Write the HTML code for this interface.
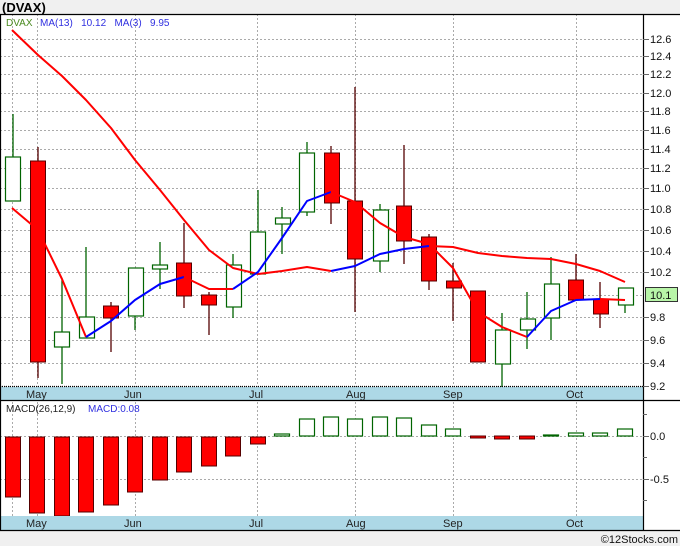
<!DOCTYPE html>
<html><head><meta charset="utf-8"><style>
html,body{margin:0;padding:0;background:#f0f0f0;}
svg{display:block;font-family:"Liberation Sans","DejaVu Sans",sans-serif;}
</style></head><body>
<svg width="680" height="546" viewBox="0 0 680 546" xmlns="http://www.w3.org/2000/svg">
<rect x="0" y="0" width="680" height="546" fill="#f0f0f0"/>
<text x="2" y="12" font-size="13" font-weight="bold" fill="#000">(DVAX)</text>
<rect x="0" y="14" width="680" height="517" fill="#fff"/>
<g stroke="#aaa" stroke-dasharray="2,2" stroke-width="1">
<line x1="0" x2="643" y1="39.5" y2="39.5"/><line x1="0" x2="643" y1="56.5" y2="56.5"/>
<line x1="0" x2="643" y1="74.5" y2="74.5"/><line x1="0" x2="643" y1="93.5" y2="93.5"/>
<line x1="0" x2="643" y1="111.5" y2="111.5"/><line x1="0" x2="643" y1="130.5" y2="130.5"/>
<line x1="0" x2="643" y1="149.5" y2="149.5"/><line x1="0" x2="643" y1="168.5" y2="168.5"/>
<line x1="0" x2="643" y1="188.5" y2="188.5"/><line x1="0" x2="643" y1="209.5" y2="209.5"/>
<line x1="0" x2="643" y1="230.5" y2="230.5"/><line x1="0" x2="643" y1="251.5" y2="251.5"/>
<line x1="0" x2="643" y1="272.5" y2="272.5"/><line x1="0" x2="643" y1="295.5" y2="295.5"/>
<line x1="0" x2="643" y1="317.5" y2="317.5"/><line x1="0" x2="643" y1="340.5" y2="340.5"/>
<line x1="0" x2="643" y1="363.5" y2="363.5"/><line x1="0" x2="643" y1="386.5" y2="386.5"/>
<line x1="0" x2="643" y1="436.5" y2="436.5"/><line x1="0" x2="643" y1="479.5" y2="479.5"/>
<line x1="12.5" x2="12.5" y1="14" y2="530"/><line x1="37.5" x2="37.5" y1="14" y2="530"/>
<line x1="135.5" x2="135.5" y1="14" y2="530"/><line x1="257.5" x2="257.5" y1="14" y2="530"/>
<line x1="355.5" x2="355.5" y1="14" y2="530"/><line x1="453.5" x2="453.5" y1="14" y2="530"/>
<line x1="576.5" x2="576.5" y1="14" y2="530"/>
</g>
<text x="6" y="26" font-size="10" fill="#4a8a20">DVAX</text>
<text x="40" y="26" font-size="10" fill="#3030e0" xml:space="preserve">MA(13)   10.12   MA(3)   9.95</text>
<g stroke-width="1.3">
<g stroke="#006400">
<line x1="13" x2="13" y1="114" y2="157"/><line x1="62" x2="62" y1="280" y2="384"/>
<line x1="86" x2="86" y1="247" y2="338"/><line x1="135" x2="135" y1="268" y2="330"/>
<line x1="160" x2="160" y1="242" y2="289"/><line x1="233" x2="233" y1="254" y2="318"/>
<line x1="258" x2="258" y1="190" y2="274"/><line x1="282" x2="282" y1="207" y2="254"/>
<line x1="307" x2="307" y1="142" y2="216"/><line x1="380" x2="380" y1="204" y2="272"/>
<line x1="502" x2="502" y1="313" y2="387"/><line x1="527" x2="527" y1="292" y2="349"/>
<line x1="551" x2="551" y1="257" y2="340"/><line x1="625" x2="625" y1="288" y2="313"/>
</g>
<g stroke="#500">
<line x1="38" x2="38" y1="147" y2="378"/><line x1="111" x2="111" y1="302" y2="352"/>
<line x1="184" x2="184" y1="223" y2="308"/><line x1="209" x2="209" y1="292" y2="335"/>
<line x1="331" x2="331" y1="146" y2="224"/><line x1="355" x2="355" y1="87" y2="312"/>
<line x1="404" x2="404" y1="145" y2="264"/><line x1="429" x2="429" y1="234" y2="290"/>
<line x1="453" x2="453" y1="263" y2="321"/><line x1="576" x2="576" y1="254" y2="300"/>
<line x1="600" x2="600" y1="282" y2="328"/>
</g></g>
<g fill="#fff" stroke="#006400" stroke-width="1.2">
<rect x="5.5" y="157" width="15" height="44"/><rect x="54.5" y="332" width="15" height="15"/>
<rect x="79.5" y="317" width="15" height="21"/><rect x="128.5" y="268" width="15" height="48"/>
<rect x="152.5" y="265" width="15" height="4"/><rect x="226.5" y="265" width="15" height="42"/>
<rect x="250.5" y="232" width="15" height="42"/><rect x="275.5" y="218" width="15" height="6"/>
<rect x="299.5" y="153" width="15" height="59"/><rect x="373.5" y="210" width="15" height="51"/>
<rect x="495.5" y="330" width="15" height="34"/><rect x="520.5" y="319" width="15" height="11"/>
<rect x="544.5" y="284" width="15" height="34"/><rect x="618.5" y="288" width="15" height="17"/>
</g>
<g fill="#f00" stroke="#500" stroke-width="1">
<rect x="30.5" y="161" width="15" height="201"/><rect x="103.5" y="306" width="15" height="12"/>
<rect x="176.5" y="263" width="15" height="33"/><rect x="201.5" y="295" width="15" height="10"/>
<rect x="324.5" y="153" width="15" height="50"/><rect x="347.5" y="201" width="15" height="58"/>
<rect x="396.5" y="206" width="15" height="35"/><rect x="421.5" y="237" width="15" height="44"/>
<rect x="446.5" y="281" width="15" height="7"/><rect x="470.5" y="291" width="15" height="71"/>
<rect x="568.5" y="280" width="15" height="20"/><rect x="593.5" y="299" width="15" height="15"/>
</g>
<g fill="none" stroke-width="2" stroke-linejoin="round">
<polyline stroke="#f00" points="12,30 38,55 62,76 86,100 111,128 135,160 160,190 184,220 209,250 233,268 258,274"/>
<polyline stroke="#f00" points="258,274 282,271 307,267 331,271"/>
<polyline stroke="#f00" points="429,246 453,247 478,253 502,256 527,258 551,259 576,264 600,271 625,282"/>
<polyline stroke="#f00" points="12,208 38,230 62,279 86,337"/>
<polyline stroke="#00f" points="86,337 111,321 135,300 160,284 184,277"/>
<polyline stroke="#f00" points="184,277 209,289 233,289"/>
<polyline stroke="#00f" points="233,289 258,272 282,238 307,201 331,192"/>
<polyline stroke="#f00" points="331,192 355,202 380,223 404,237 429,244 453,268 478,312 502,327 527,337"/>
<polyline stroke="#00f" points="527,337 551,311 576,300 600,299"/>
<polyline stroke="#f00" points="600,299 625,300"/>
<polyline stroke="#00f" points="331,271 355,266 380,254 404,249 429,246"/>
</g>
<g fill="#f00" stroke="#500" stroke-width="1">
<rect x="5.5" y="437" width="15" height="60"/><rect x="29.5" y="437" width="15" height="76"/>
<rect x="54.5" y="437" width="15" height="79"/><rect x="78.5" y="437" width="15" height="75"/>
<rect x="103.5" y="437" width="15" height="68"/><rect x="127.5" y="437" width="15" height="55"/>
<rect x="152.5" y="437" width="15" height="43"/><rect x="176.5" y="437" width="15" height="35"/>
<rect x="201.5" y="437" width="15" height="29"/><rect x="225.5" y="437" width="15" height="19"/>
<rect x="250.5" y="437" width="15" height="7"/><rect x="470.5" y="436" width="15" height="2"/>
<rect x="494.5" y="436" width="15" height="3"/><rect x="519.5" y="436" width="15" height="3"/>
</g>
<g fill="#fff" stroke="#006400" stroke-width="1.2">
<rect x="274.5" y="434" width="15" height="2"/><rect x="299.5" y="419" width="15" height="17"/>
<rect x="323.5" y="417" width="15" height="19"/><rect x="347.5" y="419" width="15" height="17"/>
<rect x="372.5" y="417" width="15" height="19"/><rect x="396.5" y="418" width="15" height="18"/>
<rect x="421.5" y="425" width="15" height="11"/><rect x="445.5" y="429" width="15" height="7"/>
<rect x="543.5" y="435" width="15" height="1" fill="#006400"/><rect x="568.5" y="433" width="15" height="3"/>
<rect x="592.5" y="433" width="15" height="3"/><rect x="617.5" y="429" width="15" height="7"/>
</g>
<text x="6" y="412" font-size="10" fill="#222">MACD(26,12,9)</text>
<text x="88" y="412" font-size="10" fill="#3030e0">MACD:0.08</text>
<rect x="0" y="387" width="643" height="13" fill="#add8e6"/>
<rect x="0" y="516" width="643" height="14" fill="#add8e6"/>
<g font-size="11" fill="#222">
<text x="26" y="398">May</text><text x="124" y="398">Jun</text><text x="249" y="398">Jul</text>
<text x="346" y="398">Aug</text><text x="443" y="398">Sep</text><text x="566" y="398">Oct</text>
<text x="26" y="527">May</text><text x="124" y="527">Jun</text><text x="249" y="527">Jul</text>
<text x="346" y="527">Aug</text><text x="443" y="527">Sep</text><text x="566" y="527">Oct</text>
</g>
<g stroke="#000" stroke-width="1.2" fill="none">
<line x1="0" x2="680" y1="14.5" y2="14.5"/>
<line x1="0.5" x2="0.5" y1="14" y2="531"/>
<line x1="643.5" x2="643.5" y1="14" y2="531"/>
<line x1="0" x2="680" y1="400.5" y2="400.5"/>
<line x1="0" x2="680" y1="530.5" y2="530.5"/>
<line x1="0" x2="643" y1="386.5" y2="386.5" stroke-dasharray="1,1"/>
</g>
<g stroke="#666" stroke-width="1">
<line x1="643" x2="649" y1="39.5" y2="39.5"/><line x1="643" x2="649" y1="56.5" y2="56.5"/>
<line x1="643" x2="649" y1="74.5" y2="74.5"/><line x1="643" x2="649" y1="93.5" y2="93.5"/>
<line x1="643" x2="649" y1="111.5" y2="111.5"/><line x1="643" x2="649" y1="130.5" y2="130.5"/>
<line x1="643" x2="649" y1="149.5" y2="149.5"/><line x1="643" x2="649" y1="168.5" y2="168.5"/>
<line x1="643" x2="649" y1="188.5" y2="188.5"/><line x1="643" x2="649" y1="209.5" y2="209.5"/>
<line x1="643" x2="649" y1="230.5" y2="230.5"/><line x1="643" x2="649" y1="251.5" y2="251.5"/>
<line x1="643" x2="649" y1="272.5" y2="272.5"/><line x1="643" x2="649" y1="317.5" y2="317.5"/>
<line x1="643" x2="649" y1="340.5" y2="340.5"/><line x1="643" x2="649" y1="363.5" y2="363.5"/>
<line x1="643" x2="649" y1="386.5" y2="386.5"/>
<line x1="643" x2="649" y1="436.5" y2="436.5"/><line x1="643" x2="649" y1="479.5" y2="479.5"/>
<line x1="643" x2="647" y1="414.5" y2="414.5"/><line x1="643" x2="647" y1="457.5" y2="457.5"/>
<line x1="643" x2="647" y1="500.5" y2="500.5"/>
</g>
<g font-size="11" fill="#111">
<text x="650" y="43">12.6</text><text x="650" y="60">12.4</text><text x="650" y="78">12.2</text>
<text x="650" y="97">12.0</text><text x="650" y="115">11.8</text><text x="650" y="134">11.6</text>
<text x="650" y="153">11.4</text><text x="650" y="172">11.2</text><text x="650" y="192">11.0</text>
<text x="650" y="213">10.8</text><text x="650" y="234">10.6</text><text x="650" y="255">10.4</text>
<text x="650" y="276">10.2</text><text x="650" y="321">9.8</text><text x="650" y="344">9.6</text>
<text x="650" y="367">9.4</text><text x="650" y="390">9.2</text>
<text x="650" y="440">0.0</text><text x="650" y="483">-0.5</text>
</g>
<rect x="645.5" y="287.5" width="32" height="14" fill="#b8f5a8" stroke="#333"/>
<text x="650" y="299" font-size="11" fill="#111">10.1</text>
<text x="678" y="543" font-size="11" fill="#111" text-anchor="end">©12Stocks.com</text>
</svg>
</body></html>
